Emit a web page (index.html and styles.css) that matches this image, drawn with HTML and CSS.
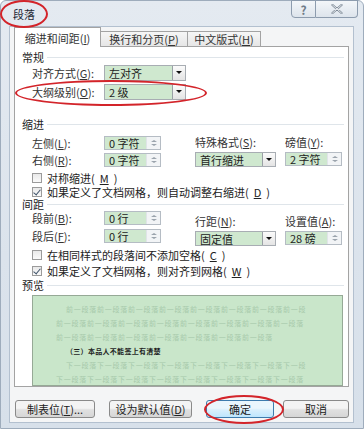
FILE: index.html
```html
<!DOCTYPE html>
<html lang="zh-CN">
<head>
    <meta charset="UTF-8">
    <meta name="viewport" content="width=device-width, initial-scale=1.0">
    <title>段落</title>
    <link rel="stylesheet" href="styles.css">
</head>
<body>
    <div class="window">
        <div class="titlebar">
            <span class="title">段落</span>
            <div class="caption-buttons">
                <span class="cap-btn help">?</span>
                <span class="cap-btn close">
                    <svg width="12" height="10" viewBox="0 0 12 10">
                        <path d="M1.5 1 L10.5 9 M10.5 1 L1.5 9" stroke="#7b8794" stroke-width="2.2" stroke-linecap="round"/>
                        <path d="M1.5 1 L10.5 9 M10.5 1 L1.5 9" stroke="#f4f6f9" stroke-width="0.9" stroke-linecap="round"/>
                    </svg>
                </span>
            </div>
        </div>

        <div class="client">
            <div class="tabs">
                <div class="tab active">缩进和间距(<u>I</u>)</div>
                <div class="tab">换行和分页(<u>P</u>)</div>
                <div class="tab">中文版式(<u>H</u>)</div>
            </div>

            <div class="panel">
                <!-- 常规 -->
                <div class="group-title g-general">常规</div>
                <div class="row row-align">
                    <span class="label">对齐方式(<u>G</u>):</span>
                    <div class="select w-short"><span class="value">左对齐</span><span class="drop"></span></div>
                </div>
                <div class="row row-outline">
                    <span class="label">大纲级别(<u>O</u>):</span>
                    <div class="select w-short"><span class="value">2 级</span><span class="drop"></span></div>
                </div>

                <!-- 缩进 -->
                <div class="group-title g-indent">缩进</div>
                <div class="block block-indent">
                    <div class="col-left">
                        <div class="row">
                            <span class="label">左侧(<u>L</u>):</span>
                            <div class="spin"><span class="value">0 字符</span><span class="arrows"></span></div>
                        </div>
                        <div class="row row-second">
                            <span class="label">右侧(<u>R</u>):</span>
                            <div class="spin"><span class="value">0 字符</span><span class="arrows"></span></div>
                        </div>
                    </div>
                    <div class="col-special">
                        <span class="top-label">特殊格式(<u>S</u>):</span>
                        <div class="select w-special"><span class="value">首行缩进</span><span class="drop"></span></div>
                    </div>
                    <div class="col-value">
                        <span class="top-label">磅值(<u>Y</u>):</span>
                        <div class="spin"><span class="value">2 字符</span><span class="arrows"></span></div>
                    </div>
                </div>
                <div class="check c-mirror"><span class="box"></span>对称缩进(<u>M</u>)</div>
                <div class="check c-grid-indent"><span class="box checked"></span>如果定义了文档网格，则自动调整右缩进(<u>D</u>)</div>

                <!-- 间距 -->
                <div class="group-title g-spacing">间距</div>
                <div class="block block-spacing">
                    <div class="col-left">
                        <div class="row">
                            <span class="label">段前(<u>B</u>):</span>
                            <div class="spin"><span class="value">0 行</span><span class="arrows"></span></div>
                        </div>
                        <div class="row row-second2">
                            <span class="label">段后(<u>F</u>):</span>
                            <div class="spin"><span class="value">0 行</span><span class="arrows"></span></div>
                        </div>
                    </div>
                    <div class="col-special">
                        <span class="top-label">行距(<u>N</u>):</span>
                        <div class="select w-special"><span class="value">固定值</span><span class="drop"></span></div>
                    </div>
                    <div class="col-value">
                        <span class="top-label">设置值(<u>A</u>):</span>
                        <div class="spin"><span class="value">28 磅</span><span class="arrows"></span></div>
                    </div>
                </div>
                <div class="check c-same"><span class="box"></span>在相同样式的段落间不添加空格(<u>C</u>)</div>
                <div class="check c-grid-snap"><span class="box checked"></span>如果定义了文档网格，则对齐到网格(<u>W</u>)</div>

                <!-- 预览 -->
                <div class="group-title g-preview">预览</div>
                <div class="preview">
                    <div class="p-line indent">前一段落前一段落前一段落前一段落前一段落前一段落前一段落前一段</div>
                    <div class="p-line">前一段落前一段落前一段落前一段落前一段落前一段落前一段落前一段落</div>
                    <div class="p-line">前一段落前一段落前一段落前一段落前一段落前一段落前一段落</div>
                    <div class="p-line sample">（三）本品人不能签上有清楚</div>
                    <div class="p-line indent">下一段落下一段落下一段落下一段落下一段落下一段落下一段落下一段</div>
                    <div class="p-line">下一段落下一段落下一段落下一段落下一段落下一段落下一段落下一段落</div>
                </div>
            </div>

            <div class="buttons">
                <span class="btn b-tabs">制表位(<u>T</u>)...</span>
                <span class="btn b-default">设为默认值(<u>D</u>)</span>
                <span class="btn b-ok">确定</span>
                <span class="btn b-cancel">取消</span>
            </div>
        </div>

        <!-- red annotation marks -->
        <div class="mark mark-title"></div>
        <div class="mark mark-outline"></div>
        <div class="mark mark-ok"></div>
    </div>
</body>
</html>
```

FILE: styles.css
```css
* {
    box-sizing: border-box;
}

body {
    margin: 0;
    background: #ffffff;
    font-family: "Noto Sans CJK SC", "DejaVu Sans", sans-serif;
    font-size: 11px;
    color: #333333;
}

u {
    text-decoration: underline;
    text-decoration-thickness: 1px;
    text-underline-offset: 1px;
}

.window {
    position: relative;
    width: 364px;
    height: 429px;
    display: flex;
    flex-direction: column;
    background: linear-gradient(#e4eaf1, #dbe3ec 60%, #d7e0ea);
    border: 1px solid #9eacbc;
    border-radius: 6px 6px 0 0;
}

.titlebar {
    height: 25px;
    display: flex;
    align-items: flex-start;
    padding-left: 12px;
}

.title {
    margin-top: 6px;
    line-height: 14px;
    font-size: 11px;
    color: #1d2733;
}

.caption-buttons {
    margin-left: auto;
    margin-right: 5px;
    display: flex;
    margin-top: -1px;
}

.cap-btn {
    height: 18px;
    display: flex;
    align-items: center;
    justify-content: center;
    background: linear-gradient(#f3f6f9, #dde4ec);
    border: 1px solid #8d9cae;
    color: #6f7b88;
}

.cap-btn.help {
    width: 25px;
    border-radius: 0 0 0 4px;
    font-size: 12px;
    font-weight: bold;
}

.cap-btn.close {
    width: 42px;
    border-left: none;
    border-radius: 0 0 4px 0;
}

.client {
    flex: 1;
    margin: 0 9px 5px 8px;
    padding: 0 4px;
    background: #f4f5f6;
    border: 1px solid #b3c0cf;
    display: flex;
    flex-direction: column;
}

/* tabs */
.tabs {
    height: 20px;
    display: flex;
    align-items: flex-end;
}

.tab {
    height: 15px;
    margin-bottom: 1px;
    line-height: 14px;
    text-align: center;
    white-space: nowrap;
    background: linear-gradient(#f6f6f6, #e6e6e6);
    border: 1px solid #a3a3a3;
    border-bottom: none;
    border-left: none;
    color: #333;
}

.tab.active {
    position: relative;
    z-index: 1;
    width: 87px;
    height: 20px;
    margin-bottom: 0;
    padding-top: 3px;
    background: #ffffff;
    border-left: 1px solid #a3a3a3;
}

.tab:nth-child(2) {
    width: 87px;
}

.tab:nth-child(3) {
    width: 73px;
}

.panel {
    height: 341px;
    margin-top: -1px;
    padding: 3px 4px 0 7px;
    background: #ffffff;
    border: 1px solid #a3a3a3;
    display: flex;
    flex-direction: column;
}

.group-title {
    height: 14px;
    line-height: 14px;
    display: flex;
    align-items: center;
    gap: 3px;
    color: #222;
}

.group-title::after {
    content: "";
    flex: 1;
    border-top: 1px solid #dfe5ea;
}

.g-indent {
    margin-top: 17px;
}

.g-spacing {
    height: 12px;
}

.g-preview {
    margin-top: 1px;
}

.row {
    display: flex;
    align-items: center;
    padding-left: 10px;
    height: 16px;
}

.row-align {
    margin-top: 1px;
}

.row-outline {
    margin-top: 3px;
}

.row-second {
    margin-top: 1px;
}

.row-second2 {
    margin-top: 2px;
}

.label {
    width: 72px;
    line-height: 13px;
    white-space: nowrap;
}

.value {
    flex: 1;
    padding-left: 4px;
    line-height: 12px;
    color: #222;
    background: #cfe8cf;
    height: 100%;
    display: flex;
    align-items: center;
    white-space: nowrap;
}

.select {
    height: 16px;
    display: flex;
    border: 1px solid #a8adb3;
    background: #ffffff;
}

.select.w-short {
    width: 82px;
}

.select.w-special {
    width: 81px;
    height: 15px;
}

.drop {
    width: 13px;
    border-left: 1px solid #9aa0a6;
    background: linear-gradient(#fbfbfb, #e4e4e4);
    position: relative;
}

.drop::after {
    content: "";
    position: absolute;
    left: 3px;
    top: 5px;
    border-left: 3px solid transparent;
    border-right: 3px solid transparent;
    border-top: 3px solid #111;
}

.spin {
    width: 57px;
    height: 14px;
    display: flex;
    border: 1px solid #b5bcc4;
    background: #ffffff;
}

.arrows {
    width: 14px;
    display: flex;
    flex-direction: column;
    justify-content: center;
    align-items: center;
    gap: 2px;
    background: #f2f4f6;
    border-left: 1px solid #e0e4e8;
}

.arrows::before,
.arrows::after {
    content: "";
    border-left: 3px solid transparent;
    border-right: 3px solid transparent;
}

.arrows::before {
    border-bottom: 2px solid #9aa3ac;
}

.arrows::after {
    border-top: 2px solid #9aa3ac;
}

.block {
    display: flex;
}

.block-indent {
    margin-top: 4px;
}

.col-left {
    width: 173px;
    display: flex;
    flex-direction: column;
}

.col-special {
    width: 90px;
    display: flex;
    flex-direction: column;
}

.col-value {
    display: flex;
    flex-direction: column;
}

.top-label {
    height: 14px;
    line-height: 14px;
    margin-bottom: 3px;
    white-space: nowrap;
}

.block-spacing .top-label {
    margin-top: 4px;
    margin-bottom: 3px;
}

.check {
    display: flex;
    align-items: center;
    gap: 5px;
    height: 13px;
    padding-left: 10px;
    line-height: 12px;
    color: #222;
    white-space: nowrap;
}

.c-mirror {
    margin-top: 3px;
}

.c-grid-indent {
    margin-top: 1px;
}

.c-same {
    margin-top: 2px;
}

.c-grid-snap {
    margin-top: 3px;
}

.box {
    width: 10px;
    height: 10px;
    border: 1px solid #9b9b9b;
    background: linear-gradient(#e9e9e9, #fafafa);
    position: relative;
}

.box.checked::after {
    content: "";
    position: absolute;
    left: 2px;
    top: 0px;
    width: 3px;
    height: 6px;
    border-right: 1.5px solid #41546b;
    border-bottom: 1.5px solid #41546b;
    transform: rotate(40deg);
}

/* preview */
.preview {
    margin: 3px 1px 0 10px;
    height: 91px;
    padding: 9px 0 0 23px;
    background: #c9e6ca;
    border: 1px solid #96a996;
    display: flex;
    flex-direction: column;
    gap: 5px;
}

.p-line {
    height: 9px;
    line-height: 9px;
    font-size: 7px;
    letter-spacing: 0.75px;
    color: #a7c9ab;
    white-space: nowrap;
}

.p-line.indent {
    padding-left: 10px;
}

.p-line.sample {
    padding-left: 10px;
    letter-spacing: 0.3px;
    color: #1e1e1e;
    font-weight: bold;
}

/* bottom buttons */
.buttons {
    margin-top: 13px;
    display: flex;
    height: 18px;
}

.btn {
    height: 18px;
    display: flex;
    align-items: center;
    justify-content: center;
    border: 1px solid #8a8a8a;
    border-radius: 3px;
    background: linear-gradient(#f4f4f4 45%, #e0e0e0 55%, #d6d6d6);
    color: #222;
    white-space: nowrap;
}

.b-tabs {
    width: 80px;
    margin-left: 1px;
}

.b-default {
    width: 83px;
    margin-left: 14px;
}

.b-ok {
    width: 68px;
    margin-left: 14px;
    border-color: #3d7bad;
    background: linear-gradient(#eaf6fd 45%, #d9effc 55%, #bee6fd);
}

.b-cancel {
    width: 66px;
    margin-left: 9px;
}

/* red annotation ellipses */
.mark {
    position: absolute;
    border: 2px solid #d3242a;
    border-radius: 50%;
    z-index: 5;
}

.mark-title {
    left: -1px;
    top: -1px;
    width: 48px;
    height: 28px;
}

.mark-outline {
    left: 14px;
    top: 79px;
    width: 192px;
    height: 26px;
}

.mark-ok {
    left: 203px;
    top: 394px;
    width: 80px;
    height: 29px;
}
```
